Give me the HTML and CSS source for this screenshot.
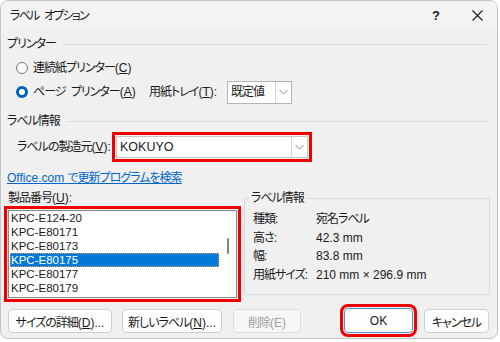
FILE: index.html
```html
<!DOCTYPE html>
<html>

<head>
    <meta charset="utf-8">
    <title>ラベル オプション</title>
    <link rel="stylesheet" href="styles.css">
</head>

<body>
    <div class="window">
        <div class="titleBar">
            <span class="title">ラベル オプション</span>
            <span class="helpButton">?</span>
            <svg class="closeButton" width="11" height="11" viewBox="0 0 11 11">
                <path d="M0.5 0.5 L10.5 10.5 M10.5 0.5 L0.5 10.5" stroke="#1a1a1a" stroke-width="1.1" fill="none" />
            </svg>
        </div>
        <div class="dialogBody">
            <div class="groupHead"><span>プリンター</span><i class="rule"></i></div>
            <div class="radioRow">
                <span class="radio"></span>
                <span class="radioLabel">連続紙プリンター<span class="latin">(<u>C</u>)</span></span>
            </div>
            <div class="radioRow">
                <span class="radio checked"></span>
                <span class="radioLabel">ページ プリンター<span class="latin">(<u>A</u>)</span></span>
                <span class="trayLabel">用紙トレイ<span class="latin">(<u>T</u>):</span></span>
                <div class="combo trayCombo">
                    <span class="comboText">既定値</span>
                    <span class="comboButton">
                        <svg width="9" height="6" viewBox="0 0 9 6"><path d="M0.5 1 L4.5 5 L8.5 1" stroke="#8a8a8a" fill="none" /></svg>
                    </span>
                </div>
            </div>

            <div class="groupHead labelHead"><span>ラベル情報</span><i class="rule"></i></div>
            <div class="vendorRow">
                <span class="vendorLabel">ラベルの製造元<span class="latin">(<u>V</u>):</span></span>
                <div class="combo vendorCombo marked">
                    <span class="comboText latin">KOKUYO</span>
                    <span class="comboButton">
                        <svg width="9" height="6" viewBox="0 0 9 6"><path d="M0.5 1 L4.5 5 L8.5 1" stroke="#8a8a8a" fill="none" /></svg>
                    </span>
                </div>
            </div>
            <a class="updateLink" href="#"><span class="latin">Office.com </span>で更新プログラムを検索</a>

            <div class="productArea">
                <div class="productColumn">
                    <div class="productLabel">製品番号<span class="latin">(<u>U</u>):</span></div>
                    <div class="listBox marked">
                        <div class="listItems latin">
                            <div class="listItem">KPC-E124-20</div>
                            <div class="listItem">KPC-E80171</div>
                            <div class="listItem">KPC-E80173</div>
                            <div class="listItem selected">KPC-E80175</div>
                            <div class="listItem">KPC-E80177</div>
                            <div class="listItem">KPC-E80179</div>
                        </div>
                        <div class="scrollTrack"><i class="scrollThumb"></i></div>
                    </div>
                </div>
                <fieldset class="infoBox">
                    <legend>ラベル情報</legend>
                    <div class="infoRow"><span class="infoKey">種類:</span><span>宛名ラベル</span></div>
                    <div class="infoRow"><span class="infoKey">高さ:</span><span class="latin">42.3 mm</span></div>
                    <div class="infoRow"><span class="infoKey">幅:</span><span class="latin">83.8 mm</span></div>
                    <div class="infoRow"><span class="infoKey">用紙サイズ:</span><span class="latin">210 mm × 296.9 mm</span></div>
                </fieldset>
            </div>

            <div class="buttonRow">
                <button class="dlgButton detailButton">サイズの詳細<span class="latin">(<u>D</u>)...</span></button>
                <button class="dlgButton newButton">新しいラベル<span class="latin">(<u>N</u>)...</span></button>
                <button class="dlgButton deleteButton" disabled>削除<span class="latin">(E)</span></button>
                <button class="dlgButton okButton marked latin">OK</button>
                <button class="dlgButton cancelButton">キャンセル</button>
            </div>
        </div>
    </div>
</body>

</html>
```

FILE: styles.css
```css
body {
    margin: 0;
    background-color: #ffffff;
    font-family: "Liberation Sans", "Noto Sans CJK JP", sans-serif;
    font-size: 12px;
    line-height: 14px;
    letter-spacing: -1px;
    color: #1a1a1a;
    font-feature-settings: "palt";
}
.latin {
    letter-spacing: 0;
}
.window {
    box-sizing: border-box;
    width: 498px;
    height: 339px;
    background-color: #f0f0f0;
    border: 1px solid #c4c4c4;
    border-radius: 8px;
    overflow: hidden;
}
.titleBar {
    display: flex;
    align-items: center;
    height: 29px;
    padding-left: 9px;
    background-color: #f3f3f3;
}
.title {
    flex: 1;
    letter-spacing: -1.8px;
    word-spacing: 4px;
}
.helpButton {
    width: 10px;
    margin-right: 30px;
    font-size: 13px;
    font-weight: bold;
    letter-spacing: 0;
}
.closeButton {
    margin-right: 14px;
}
.dialogBody {
    padding: 0 7px 0 6px;
}
.groupHead {
    display: flex;
    align-items: center;
    height: 14px;
    margin-top: 7px;
}
.groupHead + .radioRow {
    margin-top: 5px;
}
.groupHead.labelHead {
    margin-top: 10px;
}
.rule {
    flex: 1;
    height: 1px;
    margin: 0 3px 0 6px;
    background-color: #dadada;
}
.radioRow {
    display: flex;
    align-items: center;
    height: 24px;
}
.radio {
    box-sizing: border-box;
    width: 12px;
    height: 12px;
    margin-left: 9px;
    margin-right: 5px;
    border: 1px solid #7a7a7a;
    border-radius: 50%;
    background-color: #f9f9f9;
}
.radio.checked {
    border: 3.5px solid #005fb8;
    background-color: #ffffff;
}
.radioLabel {
    width: 116px;
    word-spacing: 3px;
}
.trayLabel {
    width: 78px;
}
.combo {
    box-sizing: border-box;
    display: flex;
    align-items: center;
    height: 23px;
    background-color: #ffffff;
    border: 1px solid #b4b4b4;
}
.comboText {
    flex: 1;
    padding-left: 3px;
}
.comboButton {
    box-sizing: border-box;
    display: flex;
    align-items: center;
    justify-content: center;
    width: 16px;
    height: 100%;
    border-left: 1px solid #d4d4d4;
    background-color: #fdfdfd;
}
.trayCombo {
    width: 65px;
}
.vendorRow {
    display: flex;
    align-items: center;
    margin-top: 8px;
}
.vendorLabel {
    width: 99px;
    padding-left: 10px;
}
.vendorCombo {
    width: 192px;
    height: 22px;
    border-color: #c8c8c8;
}
.vendorCombo .comboText {
    font-size: 12.5px;
    padding-left: 3px;
}
.marked {
    outline: 3px solid #ee0000;
    outline-offset: 1px;
}
.updateLink {
    display: block;
    width: max-content;
    margin-top: 13px;
    color: #0066cc;
}
.productArea {
    display: flex;
    margin-top: 6px;
}
.productColumn {
    width: 229px;
    margin-left: 1px;
}
.listBox {
    box-sizing: border-box;
    display: flex;
    height: 88px;
    margin-top: 5px;
    background-color: #ffffff;
    border: 1px solid #8a8a8a;
}
.listItems {
    width: 210px;
    font-size: 11.5px;
}
.listItem {
    height: 14px;
    padding-left: 2px;
}
.listItem.selected {
    box-sizing: border-box;
    margin-left: 1px;
    padding-left: 1px;
    background-color: #0078d7;
    color: #ffffff;
    outline: 1px dotted #e0a060;
    outline-offset: -1px;
}
.scrollTrack {
    flex: 1;
    display: flex;
    justify-content: center;
}
.scrollThumb {
    width: 2px;
    height: 16px;
    margin-top: 27px;
    background-color: #858585;
    border-radius: 1px;
}
.infoBox {
    flex: 1;
    margin: 0 0 3px 7px;
    padding: 5px 8px 0 8px;
    border: 1px solid #d8d8d8;
    border-radius: 2px;
}
.infoBox legend {
    margin-left: -4px;
    padding: 0 2px;
}
.infoRow {
    display: flex;
    line-height: 18.6px;
}
.infoKey {
    width: 63px;
}
.buttonRow {
    display: flex;
    margin-top: 11px;
}
.dlgButton {
    box-sizing: border-box;
    height: 24px;
    padding: 0;
    font-family: inherit;
    font-size: 12px;
    letter-spacing: -1px;
    font-feature-settings: "palt";
    color: #1a1a1a;
    background-color: #fdfdfd;
    border: 1px solid #d0d0d0;
    border-radius: 4px;
}
.detailButton {
    width: 104px;
    margin-left: 1px;
}
.newButton {
    width: 100px;
    margin-left: 10px;
}
.deleteButton {
    width: 68px;
    margin-left: 11px;
    color: #a0a0a0;
    background-color: #f7f7f7;
    border-color: #dcdcdc;
}
.okButton {
    width: 69px;
    height: 25px;
    margin-left: 43px;
    margin-top: -1px;
    letter-spacing: 0;
    border-color: #4f8fd0;
}
.cancelButton {
    width: 65px;
    margin-left: 11px;
}
```
